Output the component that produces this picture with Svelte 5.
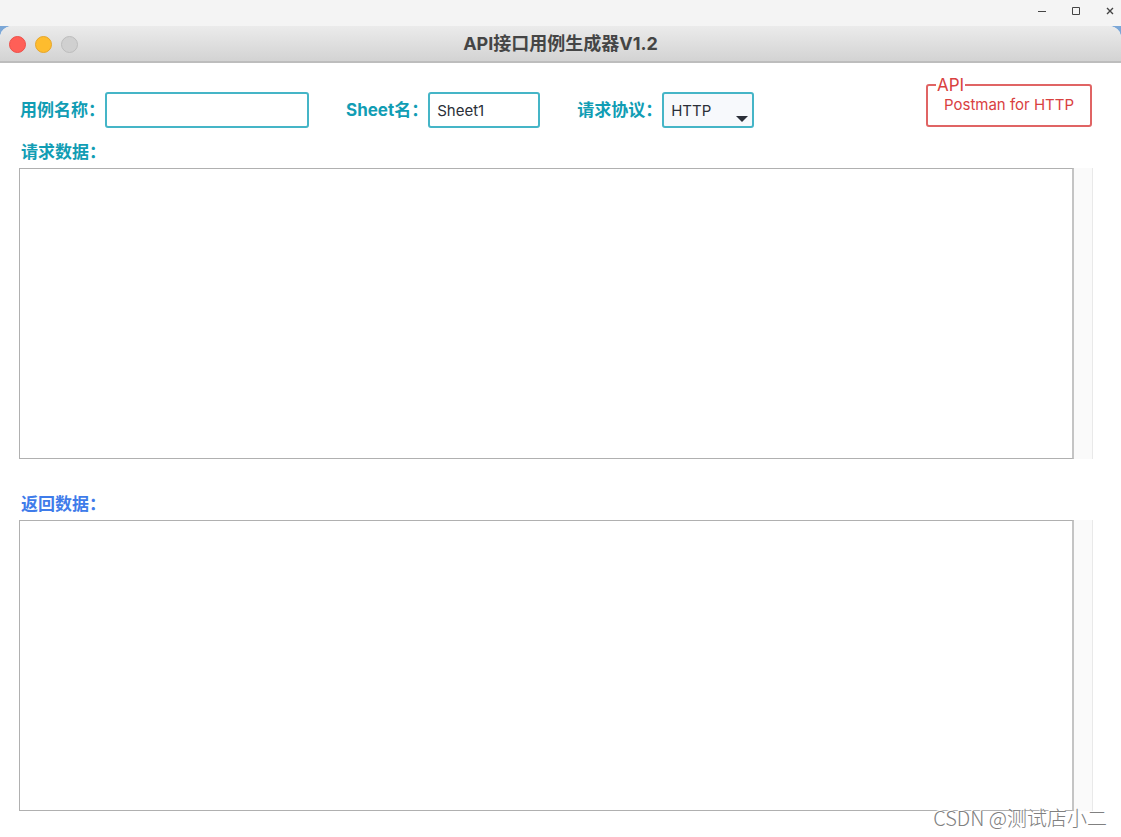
<script lang="ts">
  let caseName = $state("");
  let sheetName = $state("Sheet1");
  let protocol = $state("HTTP");
  let requestData = $state("");
  let responseData = $state("");

  const protocols = ["HTTP", "HTTPS"];
</script>

<div class="desktop">
  <div class="outer-bar">
    <button type="button" aria-label="Minimize">
      <svg width="10" height="10" viewBox="0 0 10 10"><path d="M1 5.5h8" /></svg>
    </button>
    <button type="button" aria-label="Maximize">
      <svg width="10" height="10" viewBox="0 0 10 10"><path d="M1.5 1.5h7v7h-7z" /></svg>
    </button>
    <button type="button" aria-label="Close">
      <svg width="10" height="10" viewBox="0 0 10 10"><path class="cross" d="M2 2l6 6M8 2l-6 6" /></svg>
    </button>
  </div>

  <div class="window">
    <header class="title-bar">
      <div class="lights">
        <button type="button" class="light red" aria-label="Close window"></button>
        <button type="button" class="light yellow" aria-label="Minimize window"></button>
        <button type="button" class="light grey" aria-label="Zoom window" disabled></button>
      </div>
      <h1>API接口用例生成器V1.2</h1>
    </header>

    <form class="form" onsubmit={(e) => e.preventDefault()}>
      <div class="fields">
        <div class="field">
          <label for="case-name">用例名称：</label>
          <input id="case-name" class="case-name" type="text" bind:value={caseName} />
        </div>
        <div class="field">
          <label for="sheet-name">Sheet名：</label>
          <input id="sheet-name" class="sheet-name" type="text" bind:value={sheetName} />
        </div>
        <div class="field">
          <label for="protocol">请求协议：</label>
          <div class="select-wrap">
            <select id="protocol" bind:value={protocol}>
              {#each protocols as p (p)}
                <option value={p}>{p}</option>
              {/each}
            </select>
            <svg class="arrow" width="12" height="6" viewBox="0 0 12 6"><path d="M0 0h12L6 6z" /></svg>
          </div>
        </div>

        <fieldset class="api">
          <legend>API</legend>
          <button type="button">Postman for HTTP</button>
        </fieldset>
      </div>

      <label class="request-label" for="request-data">请求数据：</label>
      <div class="text-pane">
        <textarea id="request-data" bind:value={requestData}></textarea>
        <div class="track"></div>
      </div>

      <label class="response-label" for="response-data">返回数据：</label>
      <div class="text-pane">
        <textarea id="response-data" bind:value={responseData}></textarea>
        <div class="track"></div>
      </div>
    </form>
  </div>

  <div class="watermark">CSDN @测试店小二</div>
</div>

<style>
  :global(body) {
    margin: 0;
    background: #fff;
  }

  .desktop {
    position: relative;
    display: flex;
    flex-direction: column;
    min-height: 100vh;
    font-family: Inter, "Noto Sans CJK SC", sans-serif;
    background: #7ba7d7;
  }

  button,
  input,
  select,
  textarea {
    box-sizing: border-box;
    margin: 0;
    font-family: inherit;
  }

  button {
    padding: 0;
    border: none;
    background: none;
  }

  /* Outer window controls */
  .outer-bar {
    display: flex;
    justify-content: flex-end;
    align-items: center;
    gap: 24px;
    height: 26px;
    padding-right: 6px;
    padding-bottom: 4px;
    box-sizing: border-box;
    background: #f4f4f4;
  }

  .outer-bar button {
    display: flex;
  }

  .outer-bar path {
    fill: none;
    stroke: #444;
    stroke-width: 1;
  }

  .outer-bar .cross {
    stroke-width: 1.4;
  }

  /* Window */
  .window {
    flex: 1;
    display: flex;
    flex-direction: column;
    border-radius: 12px 12px 0 0;
    overflow: hidden;
    background: #fff;
  }

  .title-bar {
    display: grid;
    grid-template-columns: 1fr auto 1fr;
    align-items: center;
    height: 37px;
    padding: 1px 9px 0;
    box-sizing: border-box;
    border-bottom: 2px solid #bdbdbd;
    background: linear-gradient(#ebebeb, #d3d3d3);
  }

  .lights {
    display: flex;
    gap: 9px;
  }

  .light {
    width: 17px;
    height: 17px;
    border: 1px solid;
    border-radius: 50%;
  }

  .red {
    background: #ff5f57;
    border-color: #ec4f49;
  }

  .yellow {
    background: #febc2e;
    border-color: #e5a52a;
  }

  .grey {
    background: #d0d0d0;
    border-color: #bcbcbc;
  }

  h1 {
    margin: 0;
    font-size: 18px;
    line-height: 24px;
    font-weight: 700;
    color: #454545;
  }

  /* Form */
  .form {
    flex: 1;
    display: flex;
    flex-direction: column;
    padding: 13px 28px 26px 19px;
  }

  .fields {
    display: flex;
    align-items: flex-end;
    height: 52px;
  }

  .field {
    display: flex;
    align-items: center;
    margin-right: 36px;
  }

  label {
    padding-left: 2px;
    font-size: 17px;
    line-height: 24px;
    font-weight: 700;
    white-space: nowrap;
    color: #119db4;
  }

  .field label {
    padding-left: 1px;
  }

  input,
  select {
    height: 36px;
    padding: 0 7px;
    border: 2px solid #45b5c7;
    border-radius: 3px;
    font-size: 15px;
    color: #2b2f38;
    background: #fff;
    outline: none;
  }

  .case-name {
    width: 204px;
  }

  .sheet-name {
    width: 112px;
  }

  .select-wrap {
    position: relative;
    display: flex;
  }

  select {
    width: 92px;
    appearance: none;
    background: #f7f9fc;
  }

  .arrow {
    position: absolute;
    right: 6px;
    bottom: 6px;
    fill: #2b2f38;
    pointer-events: none;
  }

  .api {
    width: 166px;
    height: 51px;
    margin: 0 1px 1px auto;
    padding: 0;
    box-sizing: border-box;
    border: 2px solid #e06464;
    border-radius: 3px;
    color: #d9413f;
  }

  .api legend {
    margin-left: 8px;
    padding: 0 1px;
    font-size: 17px;
    line-height: 18px;
  }

  .api button {
    display: block;
    margin: 0 auto;
    font-size: 15px;
    line-height: 22px;
    color: inherit;
  }

  .request-label {
    padding-top: 12px;
    padding-bottom: 4px;
  }

  .response-label {
    padding-top: 33px;
    padding-bottom: 4px;
    color: #3f7cea;
  }

  .text-pane {
    flex: 1;
    display: flex;
  }

  textarea {
    flex: 1;
    min-height: 120px;
    padding: 8px;
    border: 1px solid #b0b0b0;
    border-right: 2px solid #c4c4c4;
    border-radius: 0;
    font-size: 15px;
    resize: none;
    outline: none;
    background: #fff;
  }

  .track {
    width: 18px;
    border-right: 1px solid #e9e9e9;
    background: #fafafa;
  }

  .watermark {
    position: absolute;
    right: 14px;
    bottom: 5px;
    font-family: "Noto Sans CJK SC", sans-serif;
    font-size: 20px;
    line-height: 28px;
    font-weight: 300;
    color: #808080;
    text-shadow: -1px -1px 0 #fff;
    pointer-events: none;
  }
</style>
